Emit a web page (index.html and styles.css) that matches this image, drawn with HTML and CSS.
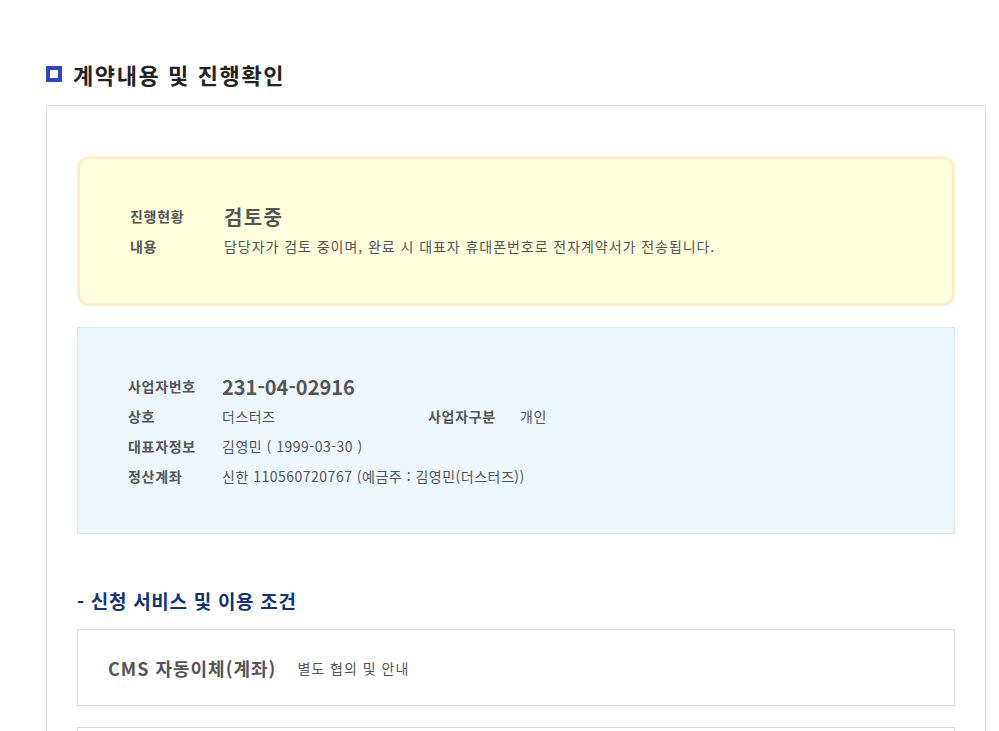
FILE: index.html
```html
<!DOCTYPE html>
<html lang="ko">
<head>
  <meta charset="UTF-8">
  <title>계약내용 및 진행확인</title>
  <link rel="stylesheet" href="styles.css">
</head>
<body>

  <div class="page">
    <h2 class="page-title"><span class="title-mark"></span>계약내용 및 진행확인</h2>

    <div class="contract-box">

      <div class="status-box">
        <div class="info-row">
          <span class="info-label">진행현황</span>
          <span class="info-value big">검토중</span>
        </div>
        <div class="info-row">
          <span class="info-label">내용</span>
          <span class="info-value wide">담당자가 검토 중이며, 완료 시 대표자 휴대폰번호로 전자계약서가 전송됩니다.</span>
        </div>
      </div>

      <div class="biz-box">
        <div class="info-row">
          <span class="info-label">사업자번호</span>
          <span class="info-value big num">231-04-02916</span>
        </div>
        <div class="info-row">
          <span class="info-label">상호</span>
          <span class="info-value half">더스터즈</span>
          <span class="info-label sub">사업자구분</span>
          <span class="info-value">개인</span>
        </div>
        <div class="info-row">
          <span class="info-label">대표자정보</span>
          <span class="info-value">김영민 ( 1999-03-30 )</span>
        </div>
        <div class="info-row">
          <span class="info-label">정산계좌</span>
          <span class="info-value">신한 110560720767 (예금주 : 김영민(더스터즈))</span>
        </div>
      </div>

      <h3 class="section-title">- 신청 서비스 및 이용 조건</h3>

      <div class="service-box">
        <span class="service-name">CMS 자동이체(계좌)</span>
        <span class="service-desc">별도 협의 및 안내</span>
      </div>

      <div class="service-box"></div>

    </div>
  </div>

</body>
</html>
```

FILE: styles.css
```css
* {
  margin: 0;
  padding: 0;
  box-sizing: border-box;
}

body {
  font-family: 'Noto Sans CJK KR', 'Noto Sans', sans-serif;
  background: #fff;
  color: #555;
  font-size: 14px;
  letter-spacing: 0.5px;
}

.page {
  padding: 59px 0 0 46px;
}

.page-title {
  display: flex;
  align-items: center;
  gap: 11px;
  font-size: 22px;
  line-height: 30px;
  font-weight: bold;
  color: #222;
  letter-spacing: 1.6px;
  margin-bottom: 16px;
}

.title-mark {
  width: 16px;
  height: 16px;
  border: 4px solid #3344cc;
  background: #fff;
}

.contract-box {
  width: 940px;
  border: 1px solid #dddddd;
  border-bottom: none;
  padding: 50px 30px 0 30px;
  height: 640px;
}

.status-box {
  background: #ffffdd;
  border: 3px solid #ffeecc;
  border-radius: 12px;
  padding: 42px 50px;
}

.biz-box {
  margin-top: 21px;
  background: #eff7fe;
  border: 1px solid #dde3ea;
  padding: 43px 50px 42px 50px;
}

.info-row {
  display: flex;
  align-items: center;
  height: 30px;
}

.info-label {
  width: 94px;
  font-weight: bold;
  color: #555;
  letter-spacing: 0.7px;
}

.info-label.sub {
  width: 92px;
}

.info-value {
  color: #555;
}

.info-value.wide {
  letter-spacing: 0.95px;
}

.info-value.big {
  font-size: 20px;
  font-weight: bold;
  letter-spacing: 1.3px;
}

.info-value.big.num {
  letter-spacing: 0;
}

.info-value.half {
  width: 206px;
}

.section-title {
  margin-top: 53px;
  margin-bottom: 14px;
  font-size: 19px;
  line-height: 28px;
  font-weight: bold;
  color: #113380;
  letter-spacing: 0.7px;
}

.service-box {
  display: flex;
  align-items: center;
  gap: 21px;
  height: 77px;
  border: 1px solid #dddddd;
  padding: 0 30px;
  margin-bottom: 21px;
}

.service-name {
  font-size: 18px;
  font-weight: bold;
  color: #555;
  letter-spacing: 1px;
}

.service-desc {
  font-size: 14px;
  color: #555;
  letter-spacing: 1px;
}
```
